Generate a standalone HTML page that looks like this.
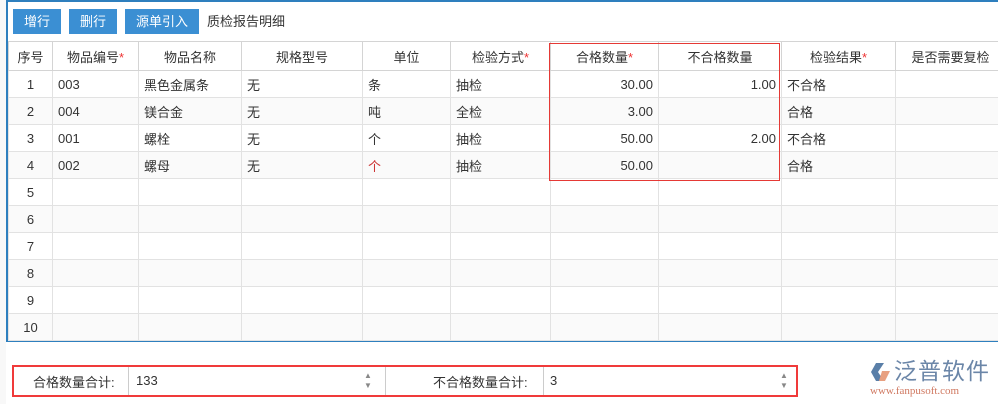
<!DOCTYPE html>
<html><head><meta charset="utf-8"><style>
*{margin:0;padding:0;box-sizing:border-box}
body{width:998px;height:404px;background:#fff;font-family:"Liberation Sans","Noto Sans CJK SC",sans-serif;font-size:13px;color:#333;position:relative;overflow:hidden}
.abs{position:absolute}
.btn{position:absolute;top:9px;height:25px;background:#3b8fd3;color:#fff;font-size:13px;line-height:25px;text-align:center}
table{position:absolute;left:8px;top:41px;border-collapse:collapse;table-layout:fixed;width:997px}
td{height:27px;border:1px solid #e2e2e2;padding:0 5px;white-space:nowrap;overflow:hidden}
tr.h td{height:29px;text-align:center;border-color:#d4d4d4}
tr:nth-child(odd):not(.h) td{background:#fafafa}
.c{text-align:center}.r{text-align:right}
.s{color:#e33}
</style></head><body>
<div class="abs" style="left:0;top:0;width:6px;height:404px;background:#f8f8f8"></div>
<div class="abs" style="left:6px;top:0;width:992px;height:342px;border-left:2px solid #2e7fbe;border-top:2px solid #2e7fbe;border-bottom:2px solid #2e7fbe"></div>
<div class="btn" style="left:13px;width:48px">增行</div>
<div class="btn" style="left:69px;width:48px">删行</div>
<div class="btn" style="left:125px;width:74px">源单引入</div>
<div class="abs" style="left:207px;top:9px;line-height:25px">质检报告明细</div>
<table>
<colgroup><col style="width:44px"><col style="width:86px"><col style="width:103px"><col style="width:121px"><col style="width:88px"><col style="width:100px"><col style="width:108px"><col style="width:123px"><col style="width:114px"><col style="width:110px"></colgroup>
<tr class="h"><td>序号</td><td>物品编号<span class="s">*</span></td><td>物品名称</td><td>规格型号</td><td>单位</td><td>检验方式<span class="s">*</span></td><td>合格数量<span class="s">*</span></td><td>不合格数量</td><td>检验结果<span class="s">*</span></td><td>是否需要复检</td></tr>
<tr><td class="c">1</td><td>003</td><td>黑色金属条</td><td>无</td><td>条</td><td>抽检</td><td class="r">30.00</td><td class="r">1.00</td><td>不合格</td><td></td></tr>
<tr><td class="c">2</td><td>004</td><td>镁合金</td><td>无</td><td>吨</td><td>全检</td><td class="r">3.00</td><td class="r"></td><td>合格</td><td></td></tr>
<tr><td class="c">3</td><td>001</td><td>螺栓</td><td>无</td><td>个</td><td>抽检</td><td class="r">50.00</td><td class="r">2.00</td><td>不合格</td><td></td></tr>
<tr><td class="c">4</td><td>002</td><td>螺母</td><td>无</td><td style="color:#c33">个</td><td>抽检</td><td class="r">50.00</td><td class="r"></td><td>合格</td><td></td></tr>
<tr><td class="c">5</td><td></td><td></td><td></td><td></td><td></td><td></td><td></td><td></td><td></td></tr>
<tr><td class="c">6</td><td></td><td></td><td></td><td></td><td></td><td></td><td></td><td></td><td></td></tr>
<tr><td class="c">7</td><td></td><td></td><td></td><td></td><td></td><td></td><td></td><td></td><td></td></tr>
<tr><td class="c">8</td><td></td><td></td><td></td><td></td><td></td><td></td><td></td><td></td><td></td></tr>
<tr><td class="c">9</td><td></td><td></td><td></td><td></td><td></td><td></td><td></td><td></td><td></td></tr>
<tr><td class="c">10</td><td></td><td></td><td></td><td></td><td></td><td></td><td></td><td></td><td></td></tr>
</table>
<div class="abs" style="left:549px;top:43px;width:231px;height:138px;border:1px solid #e53935"></div>
<div class="abs" style="left:12px;top:365px;width:786px;height:32px;border:2px solid #f03a3a"></div>
<div class="abs" style="left:128px;top:367px;width:1px;height:28px;background:#ccc"></div>
<div class="abs" style="left:385px;top:367px;width:1px;height:28px;background:#ccc"></div>
<div class="abs" style="left:543px;top:367px;width:1px;height:28px;background:#ccc"></div>
<div class="abs" style="left:33px;top:372px">合格数量合计:</div>
<div class="abs" style="left:136px;top:373px">133</div>
<div class="abs" style="left:364px;top:371px;font-size:8px;color:#888;line-height:10px">▲<br>▼</div>
<div class="abs" style="left:433px;top:372px">不合格数量合计:</div>
<div class="abs" style="left:550px;top:373px">3</div>
<div class="abs" style="left:780px;top:371px;font-size:8px;color:#888;line-height:10px">▲<br>▼</div>
<svg class="abs" style="left:870px;top:361px" width="22" height="22" viewBox="0 0 22 22"><path d="M6 2 L14 2 L8 11 L14 20 L6 20 L1 11 Z" fill="#5a7fa8"/><path d="M12 10 L20 10 L15 20 L9 20 Z" fill="#e8a080"/></svg>
<div class="abs" style="left:894px;top:357px;font-size:23px;color:#6b86a8;letter-spacing:1px;line-height:28px">泛普软件</div>
<div class="abs" style="left:870px;top:385px;font-size:11px;color:#d07860;font-family:'Liberation Serif',serif">www.fanpusoft.com</div>
</body></html>
